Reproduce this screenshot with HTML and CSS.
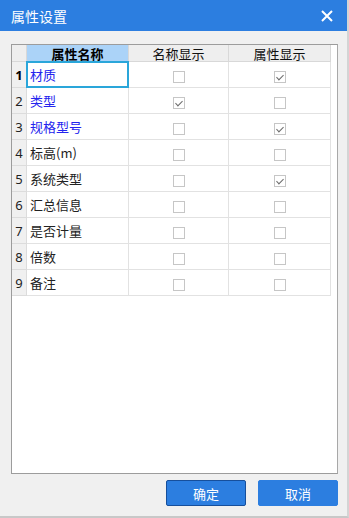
FILE: index.html
```html
<!DOCTYPE html>
<html lang="zh">
<head>
<meta charset="utf-8">
<title>属性设置</title>
<link rel="stylesheet" href="styles.css">
</head>
<body>
<div class="dialog">
  <div class="titlebar">
    <span class="title">属性设置</span>
    <svg class="close" width="12" height="12" viewBox="0 0 12 12"><path d="M1 1 L11 11 M11 1 L1 11" stroke="#fff" stroke-width="2" fill="none"/></svg>
  </div>
  <div class="content">
    <div class="grid">
      <div class="row head">
        <div class="c rh"></div>
        <div class="c c1 hl">属性名称</div>
        <div class="c c2">名称显示</div>
        <div class="c c3">属性显示</div>
      </div>
      <div class="row">
        <div class="c rh cur">1</div>
        <div class="c c1 blue sel">材质</div>
        <div class="c c2"><span class="cb"></span></div>
        <div class="c c3"><span class="cb on"></span></div>
      </div>
      <div class="row">
        <div class="c rh">2</div>
        <div class="c c1 blue">类型</div>
        <div class="c c2"><span class="cb on"></span></div>
        <div class="c c3"><span class="cb"></span></div>
      </div>
      <div class="row">
        <div class="c rh">3</div>
        <div class="c c1 blue">规格型号</div>
        <div class="c c2"><span class="cb"></span></div>
        <div class="c c3"><span class="cb on"></span></div>
      </div>
      <div class="row">
        <div class="c rh">4</div>
        <div class="c c1">标高(m)</div>
        <div class="c c2"><span class="cb"></span></div>
        <div class="c c3"><span class="cb"></span></div>
      </div>
      <div class="row">
        <div class="c rh">5</div>
        <div class="c c1">系统类型</div>
        <div class="c c2"><span class="cb"></span></div>
        <div class="c c3"><span class="cb on"></span></div>
      </div>
      <div class="row">
        <div class="c rh">6</div>
        <div class="c c1">汇总信息</div>
        <div class="c c2"><span class="cb"></span></div>
        <div class="c c3"><span class="cb"></span></div>
      </div>
      <div class="row">
        <div class="c rh">7</div>
        <div class="c c1">是否计量</div>
        <div class="c c2"><span class="cb"></span></div>
        <div class="c c3"><span class="cb"></span></div>
      </div>
      <div class="row">
        <div class="c rh">8</div>
        <div class="c c1">倍数</div>
        <div class="c c2"><span class="cb"></span></div>
        <div class="c c3"><span class="cb"></span></div>
      </div>
      <div class="row">
        <div class="c rh">9</div>
        <div class="c c1">备注</div>
        <div class="c c2"><span class="cb"></span></div>
        <div class="c c3"><span class="cb"></span></div>
      </div>
    </div>
    <div class="buttons">
      <button class="btn focus">确定</button>
      <button class="btn">取消</button>
    </div>
  </div>
</div>
</body>
</html>
```
FILE: styles.css
```css
* { box-sizing: border-box; }
html, body { margin: 0; padding: 0; }
body {
  width: 349px;
  height: 518px;
  overflow: hidden;
  font-family: "Noto Sans CJK SC", "Noto Sans", sans-serif;
  background: #f0f0f0;
}
.dialog {
  width: 349px;
  height: 518px;
  display: flex;
  flex-direction: column;
  border-right: 2px solid #d4d4d4;
  border-bottom: 2px solid #c8c8c8;
}
.titlebar {
  height: 31px;
  background: #2c7ee0;
  display: flex;
  align-items: center;
  justify-content: space-between;
  padding: 0 14px 0 11px;
  flex: none;
}
.title {
  color: #fff;
  font-size: 14px;
  line-height: 16px;
}
.close { display: block; margin-top: 1px; }
.content {
  flex: 1;
  padding: 13px 10px 0 11px;
  display: flex;
  flex-direction: column;
}
.grid {
  width: 327px;
  height: 430px;
  background: #fff;
  border: 1px solid #9c9c9c;
  border-right-color: #a8a8a8;
}
.row {
  display: flex;
  height: 26px;
}
.row.head { height: 17px; }
.c {
  height: 100%;
  border-right: 1px solid #e2e2e2;
  border-bottom: 1px solid #e2e2e2;
  display: flex;
  align-items: center;
  font-size: 13px;
  color: #222;
  position: relative;
}
.rh {
  width: 15px;
  justify-content: center;
  background: #f0f0f0;
  border-color: #dcdcdc;
  font-family: "Noto Sans", sans-serif;
  font-size: 13px;
}
.rh.cur { font-weight: bold; color: #000; }
.c1 { width: 102px; padding-left: 3px; }
.c2 { width: 100px; justify-content: center; }
.c3 { width: 102px; justify-content: center; }
.head .c {
  background: #eeeeee;
  border-color: #d8d8d8;
  justify-content: center;
  padding-left: 0;
  font-size: 13px;
  line-height: 15px;
  color: #111;
}
.head .c.hl {
  background: #abd3f8;
  font-weight: bold;
  color: #000;
}
.blue { color: #2424ee; }
.sel::after {
  content: "";
  position: absolute;
  left: -1px;
  top: -1px;
  right: -1px;
  bottom: -1px;
  border: 2px solid #2aa6da;
}
.cb {
  width: 12px;
  height: 12px;
  border: 1px solid #c6c6c6;
  background: #fff;
  display: block;
  margin-top: 4px;
  position: relative;
}
.cb.on::after {
  content: "";
  position: absolute;
  left: 3px;
  top: 1px;
  width: 3px;
  height: 6px;
  border-right: 1px solid #6a6a6a;
  border-bottom: 1px solid #6a6a6a;
  transform: rotate(45deg);
}
.buttons {
  display: flex;
  justify-content: flex-end;
  gap: 12px;
  margin-top: 6px;
  width: 327px;
}
.btn {
  width: 80px;
  height: 26px;
  background: #2c7ee0;
  color: #fff;
  border: 1px solid #2c7ee0;
  border-radius: 2px;
  font-family: "Noto Sans CJK SC", sans-serif;
  font-size: 13px;
  padding: 0;
}
.btn.focus { border-color: #164f9c; }
```
